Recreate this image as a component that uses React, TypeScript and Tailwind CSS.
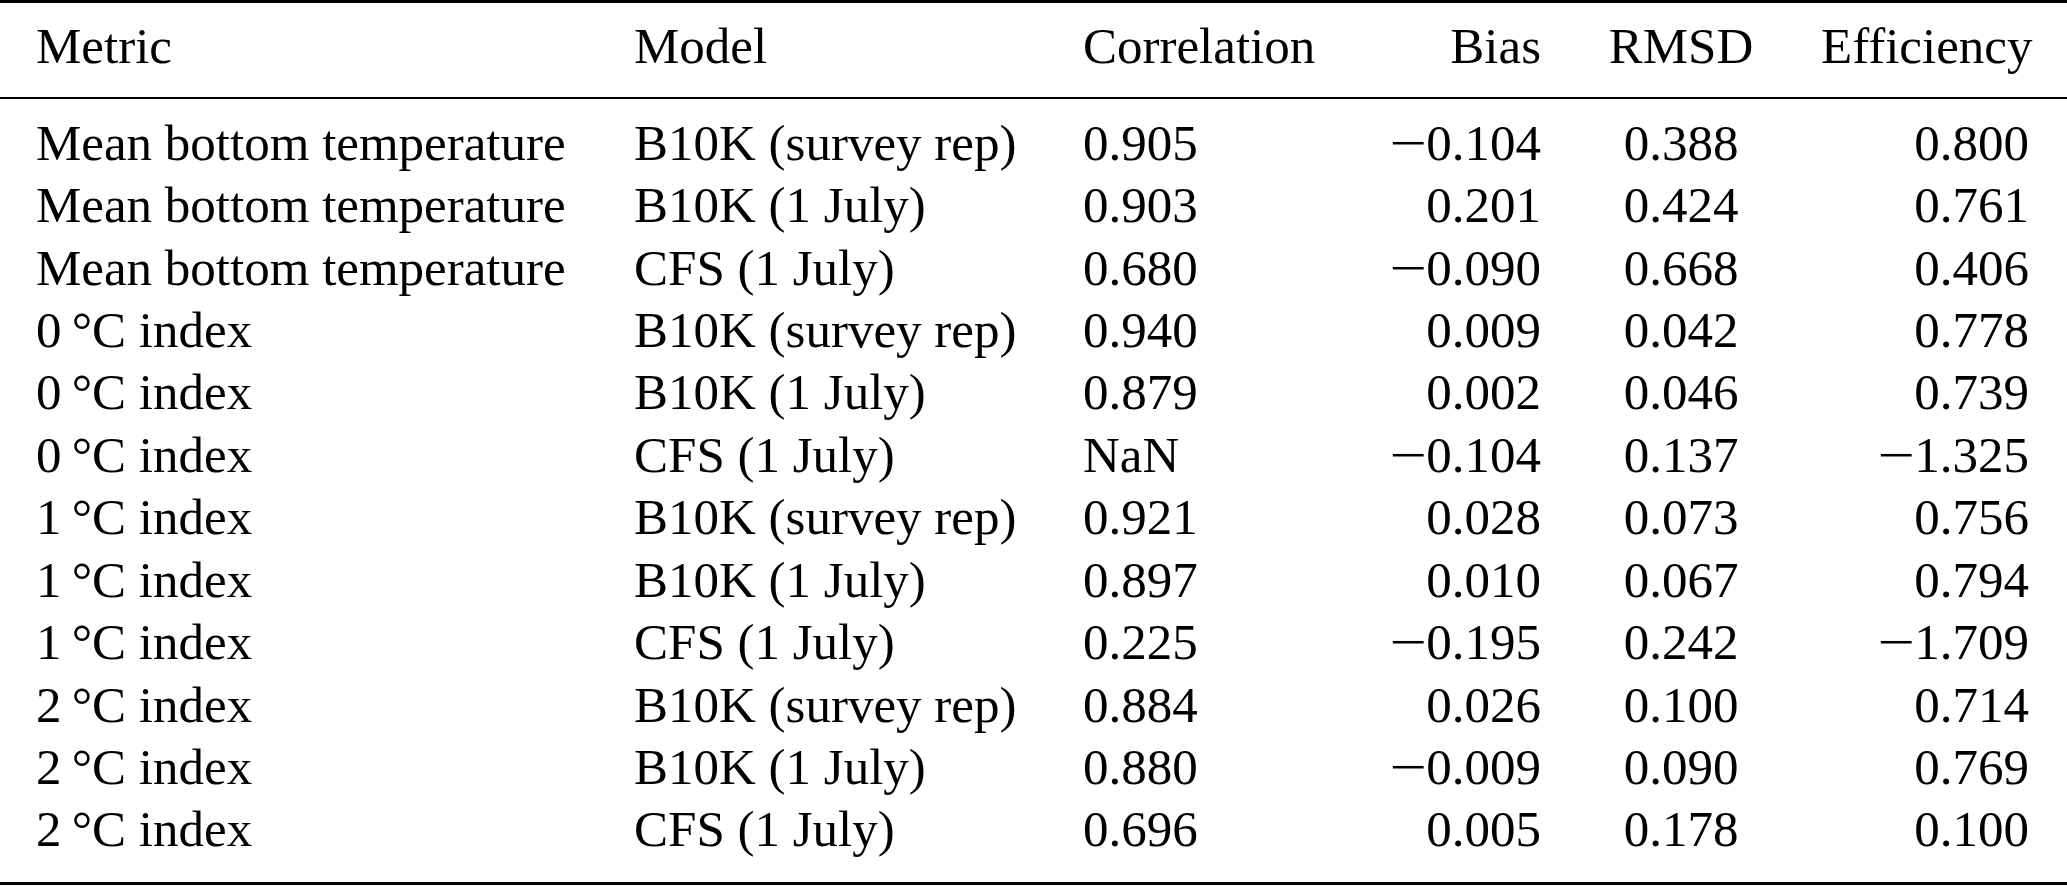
import React from 'react';

// Skill metrics per index and model run
interface Row {
    metric: string;
    model: string;
    corr: string;
    bias: string;
    rmsd: string;
    eff: string;
}

const deg = (n: number) => `${n}\u2009°C index`;
const MBT = 'Mean bottom temperature';

// widen the minus to match the math minus of the source
const Num: React.FC<{ v: string }> = ({ v }) =>
    v.startsWith('−') ? (
        <>
            <span className="inline-block mx-[3px] scale-x-[1.3]">−</span>
            {v.slice(1)}
        </>
    ) : (
        <>{v}</>
    );

const rows: Row[] = [
    { metric: MBT, model: 'B10K (survey rep)', corr: '0.905', bias: '−0.104', rmsd: '0.388', eff: '0.800' },
    { metric: MBT, model: 'B10K (1 July)', corr: '0.903', bias: '0.201', rmsd: '0.424', eff: '0.761' },
    { metric: MBT, model: 'CFS (1 July)', corr: '0.680', bias: '−0.090', rmsd: '0.668', eff: '0.406' },
    { metric: deg(0), model: 'B10K (survey rep)', corr: '0.940', bias: '0.009', rmsd: '0.042', eff: '0.778' },
    { metric: deg(0), model: 'B10K (1 July)', corr: '0.879', bias: '0.002', rmsd: '0.046', eff: '0.739' },
    { metric: deg(0), model: 'CFS (1 July)', corr: 'NaN', bias: '−0.104', rmsd: '0.137', eff: '−1.325' },
    { metric: deg(1), model: 'B10K (survey rep)', corr: '0.921', bias: '0.028', rmsd: '0.073', eff: '0.756' },
    { metric: deg(1), model: 'B10K (1 July)', corr: '0.897', bias: '0.010', rmsd: '0.067', eff: '0.794' },
    { metric: deg(1), model: 'CFS (1 July)', corr: '0.225', bias: '−0.195', rmsd: '0.242', eff: '−1.709' },
    { metric: deg(2), model: 'B10K (survey rep)', corr: '0.884', bias: '0.026', rmsd: '0.100', eff: '0.714' },
    { metric: deg(2), model: 'B10K (1 July)', corr: '0.880', bias: '−0.009', rmsd: '0.090', eff: '0.769' },
    { metric: deg(2), model: 'CFS (1 July)', corr: '0.696', bias: '0.005', rmsd: '0.178', eff: '0.100' },
];

const gridCols = 'grid grid-cols-[598px_449px_287px_171px_280px_208px] pl-[36px] pr-[38px] leading-[62.43px] whitespace-nowrap';

const Cells: React.FC<{ r: Row }> = ({ r }) => (
    <>
        <div>{r.metric}</div>
        <div>{r.model}</div>
        <div>{r.corr}</div>
        <div className="text-right"><Num v={r.bias} /></div>
        <div className="text-center">{r.rmsd}</div>
        <div className="text-right"><Num v={r.eff} /></div>
    </>
);

export default function App() {
    return (
        <div className="w-[2067px] h-[886px] bg-white text-black font-['Liberation_Serif','Times_New_Roman',serif] text-[51px] overflow-hidden">
            {/* Header */}
            <div className="border-t-[3px] border-b-2 border-black pt-[12px] pb-[19.6px]">
                <div className={gridCols}>
                    <Cells r={{ metric: 'Metric', model: 'Model', corr: 'Correlation', bias: 'Bias', rmsd: 'RMSD', eff: 'Efficiency' }} />
                </div>
            </div>

            {/* Body */}
            <div className="border-b-[3px] border-black pt-[12.6px] pb-[21.2px]">
                <div className={gridCols}>
                    {rows.map((r, i) => (
                        <Cells key={i} r={r} />
                    ))}
                </div>
            </div>
        </div>
    );
}
